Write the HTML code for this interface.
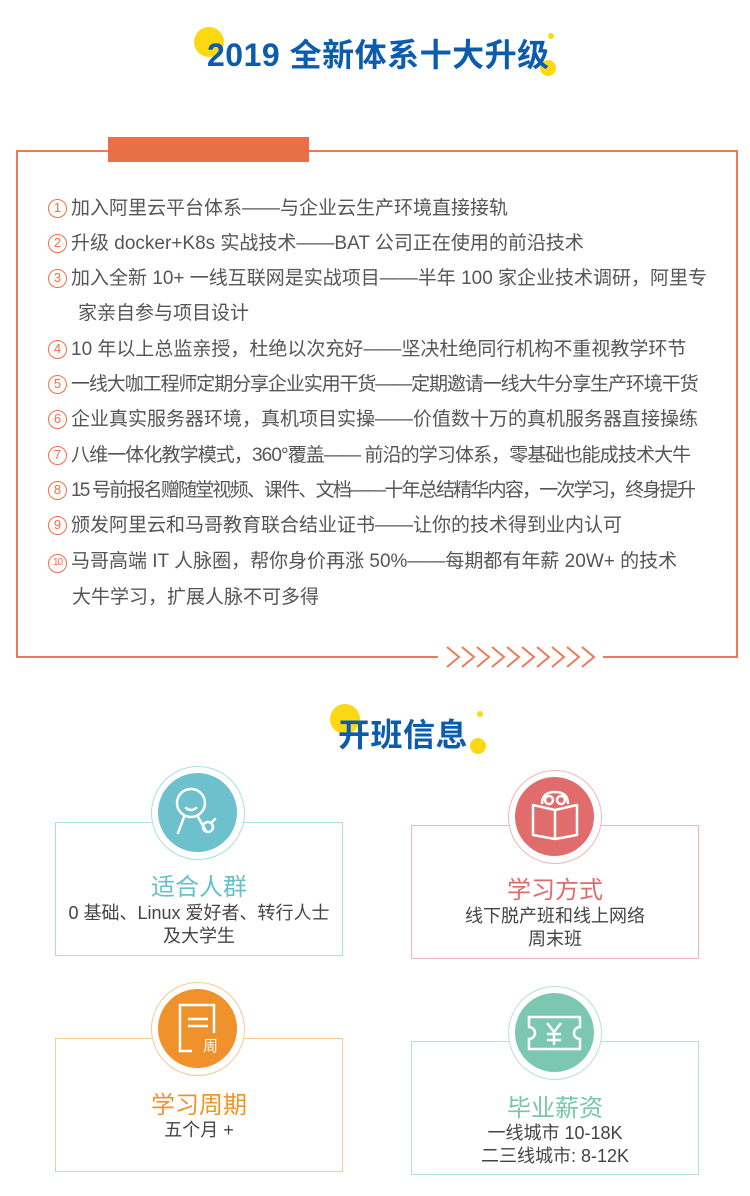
<!DOCTYPE html>
<html><head><meta charset="utf-8"><style>
*{margin:0;padding:0;box-sizing:border-box}
body{width:750px;height:1196px;background:#fff;position:relative;overflow:hidden;font-family:"Liberation Sans","Noto Sans CJK SC",sans-serif}
.a{position:absolute}
.ttl{font-weight:bold;color:#0c5cae;font-size:32px;white-space:nowrap;letter-spacing:0.5px}
.dot{position:absolute;border-radius:50%;background:#fbd811}
.li{position:absolute;left:48px;font-size:19px;color:#555;white-space:nowrap;line-height:24px}
.n{display:inline-block;width:19px;height:19px;border:1.5px solid #ec7046;border-radius:50%;color:#ec7046;font-size:13px;line-height:16px;text-align:center;vertical-align:2px;margin-right:4px;letter-spacing:0}
.n.s{font-size:10px;letter-spacing:-1px}
.card{position:absolute;width:288px;height:134px;border:1.5px solid;text-align:center}
.ct{position:absolute;left:0;right:0;font-size:24px}
.cd{position:absolute;left:0;right:0;font-size:18px;color:#444;line-height:23px}
.ring{position:absolute;width:94px;height:94px;border-radius:50%;border:1.5px solid;background:#fff}
.in{position:absolute;left:6px;top:6px;width:79px;height:79px;border-radius:50%}
</style></head><body>
<div class="dot" style="left:194px;top:27px;width:30px;height:30px"></div>
<div class="dot" style="left:548px;top:33px;width:6px;height:6px"></div>
<div class="dot" style="left:540px;top:60px;width:16px;height:16px"></div>
<div class="a ttl" style="left:207px;top:30px">2019 全新体系十大升级</div>

<div class="a" style="left:16px;top:150px;width:722px;height:508px;border:2px solid #ec7a55;border-bottom:none"></div>
<div class="a" style="left:16px;top:656px;width:422px;height:2px;background:#ec7a55"></div>
<div class="a" style="left:603px;top:656px;width:135px;height:2px;background:#ec7a55"></div>
<svg class="a" style="left:445px;top:645px" width="152" height="24"><g fill="none" stroke="#ec7a55" stroke-width="2">
<path d="M2 2l12 10-12 10M17 2l12 10-12 10M32 2l12 10-12 10M47 2l12 10-12 10M62 2l12 10-12 10M77 2l12 10-12 10M92 2l12 10-12 10M107 2l12 10-12 10M122 2l12 10-12 10M137 2l12 10-12 10"/></g></svg>
<div class="a" style="left:108px;top:137px;width:201px;height:25px;background:#e96f47"></div>

<div class="li" style="top:197px"><span class="n">1</span>加入阿里云平台体系——与企业云生产环境直接接轨</div>
<div class="li" style="top:232px"><span class="n">2</span>升级 docker+K8s 实战技术——BAT 公司正在使用的前沿技术</div>
<div class="li" style="top:267px"><span class="n">3</span>加入全新 10+ 一线互联网是实战项目——半年 100 家企业技术调研，阿里专</div>
<div class="li" style="top:302px;left:78px">家亲自参与项目设计</div>
<div class="li" style="top:338px"><span class="n">4</span>10 年以上总监亲授，杜绝以次充好——坚决杜绝同行机构不重视教学环节</div>
<div class="li" style="top:373px;letter-spacing:-1.1px"><span class="n">5</span>一线大咖工程师定期分享企业实用干货——定期邀请一线大牛分享生产环境干货</div>
<div class="li" style="top:408px"><span class="n">6</span>企业真实服务器环境，真机项目实操——价值数十万的真机服务器直接操练</div>
<div class="li" style="top:444px;letter-spacing:-0.9px"><span class="n">7</span>八维一体化教学模式，360°覆盖—— 前沿的学习体系，零基础也能成技术大牛</div>
<div class="li" style="top:479px;letter-spacing:-1.8px"><span class="n">8</span>15 号前报名赠随堂视频、课件、文档——十年总结精华内容，一次学习，终身提升</div>
<div class="li" style="top:514px"><span class="n">9</span>颁发阿里云和马哥教育联合结业证书——让你的技术得到业内认可</div>
<div class="li" style="top:550px"><span class="n s">10</span>马哥高端 IT 人脉圈，帮你身价再涨 50%——每期都有年薪 20W+ 的技术</div>
<div class="li" style="top:586px;left:72px">大牛学习，扩展人脉不可多得</div>

<div class="dot" style="left:330px;top:704px;width:30px;height:30px"></div>
<div class="dot" style="left:477px;top:711px;width:6px;height:6px"></div>
<div class="dot" style="left:470px;top:738px;width:16px;height:16px"></div>
<div class="a ttl" style="left:338px;top:710px">开班信息</div>

<!-- card1 -->
<div class="card" style="left:55px;top:822px;border-color:#a8dfe2">
<div class="ct" style="top:44px;color:#66c1ca">适合人群</div>
<div class="cd" style="top:79px">0 基础、Linux 爱好者、转行人士<br>及大学生</div></div>
<div class="ring" style="left:151px;top:766px;border-color:#a8dfe2"><div class="in" style="background:#6cc1cc">
<svg width="79" height="79"><g fill="none" stroke="#fff" stroke-width="2.5" stroke-linecap="round"><circle cx="33" cy="30" r="14"/><path d="M28 35q5 4 10 0M26 44l-6 16M40 44l8 14"/><circle cx="50" cy="54" r="5"/><path d="M53 50l4-4"/></g></svg></div></div>

<!-- card2 -->
<div class="card" style="left:411px;top:825px;border-color:#f1b6b6">
<div class="ct" style="top:44px;color:#df6a6a">学习方式</div>
<div class="cd" style="top:79px">线下脱产班和线上网络<br>周末班</div></div>
<div class="ring" style="left:508px;top:770px;border-color:#f1b6b6"><div class="in" style="background:#e06c6c">
<svg width="79" height="79"><g fill="none" stroke="#fff" stroke-width="2.5" stroke-linejoin="round"><path d="M27 27q0-12 13-12t13 12"/><circle cx="34" cy="23" r="4"/><circle cx="46" cy="23" r="4"/><path d="M18 28v30l22 4 22-4V28l-22 5zM40 33v29"/></g></svg></div></div>

<!-- card3 -->
<div class="card" style="left:55px;top:1038px;border-color:#f5c995">
<div class="ct" style="top:46px;color:#ef9429">学习周期</div>
<div class="cd" style="top:80px">五个月 +</div></div>
<div class="ring" style="left:151px;top:982px;border-color:#f5c995"><div class="in" style="background:#ef922b">
<svg width="79" height="79"><g fill="none" stroke="#fff" stroke-width="2.5"><path d="M34 62H22V16h34v28"/><path d="M30 30h20M30 37h20"/></g><text x="45" y="62" fill="#fff" font-size="15" font-family="Noto Sans CJK SC,sans-serif">周</text></svg></div></div>

<!-- card4 -->
<div class="card" style="left:411px;top:1041px;border-color:#b6e2d5">
<div class="ct" style="top:46px;color:#76c6ac">毕业薪资</div>
<div class="cd" style="top:80px">一线城市 10-18K<br>二三线城市: 8-12K</div></div>
<div class="ring" style="left:508px;top:986px;border-color:#b6e2d5"><div class="in" style="background:#7cc7b0">
<svg width="79" height="79"><g fill="none" stroke="#fff" stroke-width="2.5"><path d="M14 24h51v10a6 6 0 0 0 0 12v10H14V46a6 6 0 0 0 0-12z"/><path d="M32 30l7 9 7-9M39 39v13M32 41h14M32 47h14"/></g></svg></div></div>
</body></html>
